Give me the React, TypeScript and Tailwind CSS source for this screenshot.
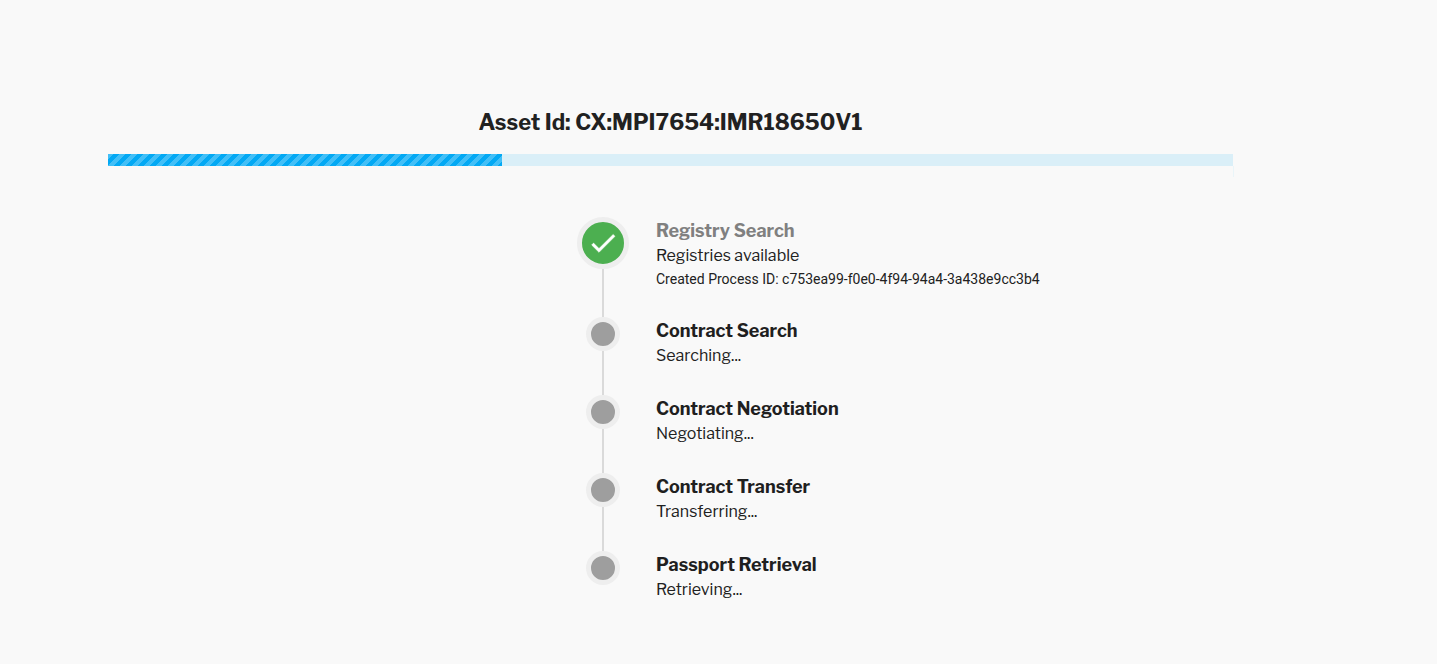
import React from "react";

type Step = { title: string; status: string; detail?: string; done?: boolean };

const steps: Step[] = [
  {
    title: "Registry Search",
    status: "Registries available",
    detail: "Created Process ID: c753ea99-f0e0-4f94-94a4-3a438e9cc3b4",
    done: true,
  },
  { title: "Contract Search", status: "Searching..." },
  { title: "Contract Negotiation", status: "Negotiating..." },
  { title: "Contract Transfer", status: "Transferring..." },
  { title: "Passport Retrieval", status: "Retrieving..." },
];

function Dot({ done }: { done?: boolean }) {
  if (done) {
    return (
      <span className="flex size-[52px] shrink-0 items-center justify-center rounded-full border-[5px] border-[#eeeeee] bg-[#4caf50] text-white">
        <svg viewBox="0 0 24 24" className="size-8 shrink-0" fill="currentColor" stroke="currentColor" strokeWidth="0.4" aria-hidden="true">
          <path d="M21,7L9,19L3.5,13.5L4.91,12.09L9,16.17L19.59,5.59L21,7Z" />
        </svg>
      </span>
    );
  }
  return <span className="size-[34px] shrink-0 rounded-full border-[5px] border-[#eeeeee] bg-[#9e9e9e]" />;
}

function StepRow({ step, last }: { step: Step; last: boolean }) {
  return (
    <li className={step.done ? "flex min-h-[100px] gap-[27px]" : "flex min-h-[78px] gap-[27px]"}>
      <div className="flex w-[52px] shrink-0 flex-col items-center">
        <Dot done={step.done} />
        {!last && <span className="w-0.5 grow bg-[#dadada]" />}
      </div>
      <div className="pt-px">
        <h2
          className={
            step.done
              ? "text-[18px] leading-[25px] font-bold text-[#808080]"
              : "text-[18px] leading-[25px] font-bold text-[#1f1f1f]"
          }
        >
          {step.title}
        </h2>
        <p className="text-base leading-[25px]">{step.status}</p>
        {step.detail && (
          <p className="font-['Roboto',sans-serif] text-sm leading-[22px] font-normal">{step.detail}</p>
        )}
      </div>
    </li>
  );
}

export default function App() {
  return (
    <main className="min-h-screen bg-[#f9f9f9] pt-[106px] pr-[204px] pb-5 pl-[108px] font-['Libre_Franklin','Inter',sans-serif] text-[#212121]">
      <h1 className="text-center text-[22px] leading-8 font-bold">Asset Id: CX:MPI7654:IMR18650V1</h1>
      <div
        role="progressbar"
        aria-label="Passport retrieval progress"
        aria-valuenow={35}
        aria-valuemin={0}
        aria-valuemax={100}
        className="relative mt-4 h-3 bg-[#daeff8]"
      >
        <div className="h-full w-[35%] bg-[#03a9f4] bg-[linear-gradient(135deg,rgba(255,255,255,0.25)_25%,transparent_0,transparent_50%,rgba(255,255,255,0.25)_0,rgba(255,255,255,0.25)_75%,transparent_0)] bg-[length:12px_12px]" />
        <span className="absolute top-full left-full h-[11px] w-px bg-[#eaf5f9]" />
      </div>
      <ol className="mt-[51px] ml-[469px]">
        {steps.map((step, i) => (
          <StepRow key={step.title} step={step} last={i === steps.length - 1} />
        ))}
      </ol>
    </main>
  );
}
